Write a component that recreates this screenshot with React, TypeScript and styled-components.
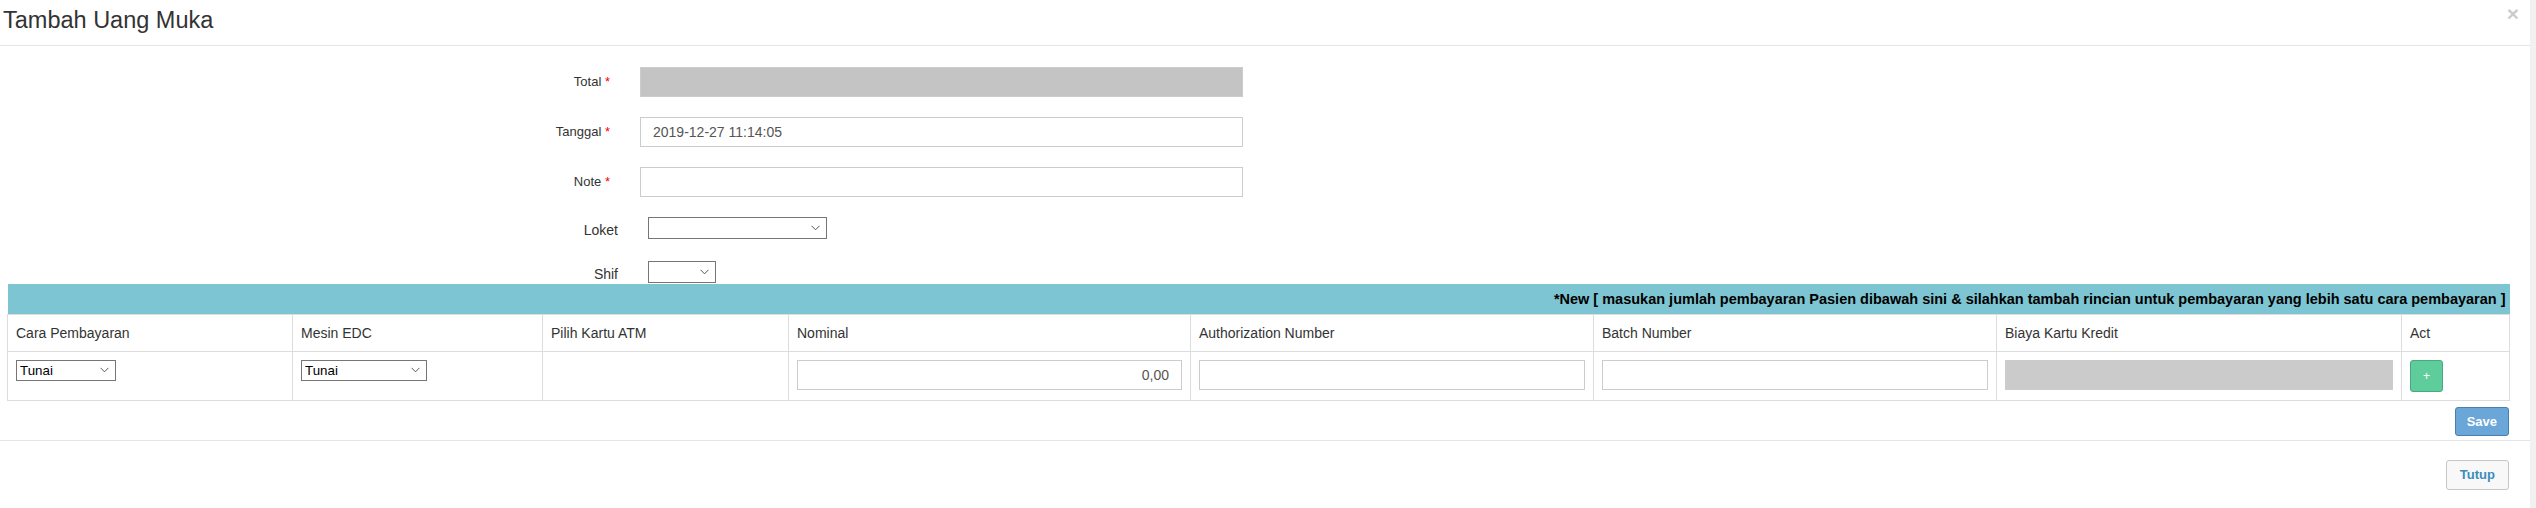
import React from 'react'
import styled, { createGlobalStyle } from 'styled-components'

const GlobalStyle = createGlobalStyle`
  html, body {
    margin: 0;
    padding: 0;
    background: #fff;
    overflow: hidden;
  }
  body {
    font-family: 'Liberation Sans', Arial, sans-serif;
    font-size: 14px;
    color: #333;
  }
  * {
    box-sizing: border-box;
  }
`

const Page = styled.div`
  display: flex;
  height: 508px;
`

const Modal = styled.div`
  flex: 1;
  min-width: 0;
  background: #fff;
`

const ScrollTrack = styled.div`
  width: 6px;
  background: #f1f1f1;
`

const Header = styled.div`
  display: flex;
  justify-content: space-between;
  align-items: flex-start;
  height: 46px;
  border-bottom: 1px solid #e5e5e5;
  padding: 0 11px 0 3px;
`

const Title = styled.h4`
  margin: 0;
  padding-top: 4px;
  font-size: 23.5px;
  font-weight: normal;
  line-height: 32px;
  color: #333;
`

const Close = styled.button`
  border: none;
  background: transparent;
  padding: 0;
  margin-top: 3px;
  font-family: 'Liberation Sans', Arial, sans-serif;
  font-size: 21px;
  font-weight: bold;
  line-height: 1;
  color: #000;
  opacity: 0.2;
  cursor: pointer;
`

const Body = styled.div`
  padding: 21px 21px 4px 7px;
`

const FormRow = styled.div<{ $select?: boolean; $gap?: number }>`
  display: flex;
  align-items: ${p => (p.$select ? 'flex-start' : 'center')};
  margin-bottom: ${p => p.$gap ?? 20}px;
  padding-left: ${p => (p.$select ? 8 : 0)}px;
`

const Label = styled.label<{ $select?: boolean }>`
  width: 603px;
  margin-right: 30px;
  text-align: right;
  font-size: ${p => (p.$select ? 14 : 13)}px;
  line-height: ${p => (p.$select ? 18 : 20)}px;
  color: #333;
  padding-top: ${p => (p.$select ? 4 : 0)}px;
`

const Required = styled.span`
  color: #f00;
`

const TextInput = styled.input<{ $readonly?: boolean; $align?: 'left' | 'right' }>`
  display: block;
  width: ${p => (p.width ? `${p.width}px` : '100%')};
  height: 30px;
  border: 1px solid #ccc;
  border-radius: 0;
  padding: 5px 12px;
  font-family: 'Liberation Sans', Arial, sans-serif;
  font-size: 14px;
  color: #555;
  text-align: ${p => p.$align ?? 'left'};
  background: ${p => (p.$readonly ? '#c4c4c4' : '#fff')};
  outline: none;
`

const SelectWrap = styled.div<{ $w: number; $h?: number }>`
  position: relative;
  width: ${p => p.$w}px;
  height: ${p => p.$h ?? 22}px;
`

const Select = styled.select`
  appearance: none;
  -webkit-appearance: none;
  width: 100%;
  height: 100%;
  border: 1px solid #767676;
  border-radius: 0;
  background: #fff;
  padding: 0 20px 0 3px;
  font-family: 'Liberation Sans', Arial, sans-serif;
  font-size: 13.33px;
  color: #000;
  outline: none;
`

const Chevron = styled.svg`
  position: absolute;
  right: 7px;
  top: 50%;
  margin-top: -3px;
  pointer-events: none;
`

const Table = styled.table`
  width: 2502px;
  border-collapse: collapse;
  table-layout: fixed;
`

const Col = styled.col<{ $w: number }>`
  width: ${p => p.$w}px;
`

const InfoCell = styled.th`
  background: #7dc5d2;
  height: 30px;
  padding: 0 4px;
  text-align: right;
  font-size: 14.5px;
  font-weight: bold;
  color: #000;
  border: none;
`

const HeadCell = styled.th`
  padding: 8px 8px;
  line-height: 20px;
  text-align: left;
  font-size: 14px;
  font-weight: normal;
  color: #333;
  border: 1px solid #ddd;
`

const Cell = styled.td`
  padding: 8px 8px 8px;
  vertical-align: top;
  border: 1px solid #ddd;
`

const AddButton = styled.button`
  display: block;
  width: 33px;
  height: 32px;
  border: 1px solid #47a97d;
  border-radius: 3px;
  background: #5fcc9c;
  color: #fff;
  font-family: 'Liberation Sans', Arial, sans-serif;
  font-size: 12px;
  padding: 0;
  cursor: pointer;
`

const SaveRow = styled.div`
  display: flex;
  justify-content: flex-end;
  width: 2502px;
  margin-top: 6px;
`

const Button = styled.button<{ $variant: 'primary' | 'default' }>`
  height: ${p => (p.$variant === 'primary' ? 29 : 30)}px;
  padding: 0 ${p => (p.$variant === 'primary' ? 11 : 13)}px;
  border-radius: 3px;
  border: 1px solid ${p => (p.$variant === 'primary' ? '#4a7fad' : '#c6c6c6')};
  background: ${p => (p.$variant === 'primary' ? '#6aa6d8' : '#f8f8f8')};
  color: ${p => (p.$variant === 'primary' ? '#fff' : '#3c8dbc')};
  font-family: 'Liberation Sans', Arial, sans-serif;
  font-size: 13px;
  font-weight: bold;
  cursor: pointer;
`

const Footer = styled.div`
  display: flex;
  justify-content: flex-end;
  border-top: 1px solid #e5e5e5;
  padding: 19px 21px;
`

const ChevronIcon = () => (
  <Chevron width="9" height="6" viewBox="0 0 9 6">
    <path d="M0.5 0.8 L4.5 4.8 L8.5 0.8" fill="none" stroke="#555" strokeWidth="1" />
  </Chevron>
)

type DropdownProps = { width: number; height?: number; value?: string }

const Dropdown: React.FC<DropdownProps> = ({ width, height, value }) => (
  <SelectWrap $w={width} $h={height}>
    <Select defaultValue={value ?? ''}>
      <option value={value ?? ''}>{value ?? ''}</option>
    </Select>
    <ChevronIcon />
  </SelectWrap>
)

const columns = [
  { title: 'Cara Pembayaran', width: 285 },
  { title: 'Mesin EDC', width: 250 },
  { title: 'Pilih Kartu ATM', width: 246 },
  { title: 'Nominal', width: 402 },
  { title: 'Authorization Number', width: 403 },
  { title: 'Batch Number', width: 403 },
  { title: 'Biaya Kartu Kredit', width: 405 },
  { title: 'Act', width: 108 }
]

const App: React.FC = () => {
  return (
    <>
      <GlobalStyle />
      <Page>
        <Modal>
          <Header>
            <Title>Tambah Uang Muka</Title>
            <Close>×</Close>
          </Header>
          <Body>
            <FormRow>
              <Label>
                Total <Required>*</Required>
              </Label>
              <TextInput width={603} $readonly readOnly />
            </FormRow>
            <FormRow>
              <Label>
                Tanggal <Required>*</Required>
              </Label>
              <TextInput width={603} defaultValue="2019-12-27 11:14:05" />
            </FormRow>
            <FormRow>
              <Label>
                Note <Required>*</Required>
              </Label>
              <TextInput width={603} />
            </FormRow>
            <FormRow $select $gap={22}>
              <Label $select>Loket</Label>
              <Dropdown width={179} />
            </FormRow>
            <FormRow $select $gap={1}>
              <Label $select>Shif</Label>
              <Dropdown width={68} />
            </FormRow>

            <Table>
              <colgroup>
                {columns.map(c => (
                  <Col key={c.title} $w={c.width} />
                ))}
              </colgroup>
              <thead>
                <tr>
                  <InfoCell colSpan={8}>
                    *New [ masukan jumlah pembayaran Pasien dibawah sini &amp; silahkan tambah rincian untuk
                    pembayaran yang lebih satu cara pembayaran ]
                  </InfoCell>
                </tr>
                <tr>
                  {columns.map(c => (
                    <HeadCell key={c.title}>{c.title}</HeadCell>
                  ))}
                </tr>
              </thead>
              <tbody>
                <tr>
                  <Cell>
                    <Dropdown width={100} height={21} value="Tunai" />
                  </Cell>
                  <Cell>
                    <Dropdown width={126} height={21} value="Tunai" />
                  </Cell>
                  <Cell />
                  <Cell>
                    <TextInput $align="right" defaultValue="0,00" />
                  </Cell>
                  <Cell>
                    <TextInput />
                  </Cell>
                  <Cell>
                    <TextInput />
                  </Cell>
                  <Cell>
                    <TextInput $readonly readOnly style={{ background: '#cbcbcb' }} />
                  </Cell>
                  <Cell>
                    <AddButton>+</AddButton>
                  </Cell>
                </tr>
              </tbody>
            </Table>
            <SaveRow>
              <Button $variant="primary">Save</Button>
            </SaveRow>
          </Body>
          <Footer>
            <Button $variant="default">Tutup</Button>
          </Footer>
        </Modal>
        <ScrollTrack />
      </Page>
    </>
  )
}

export default App
